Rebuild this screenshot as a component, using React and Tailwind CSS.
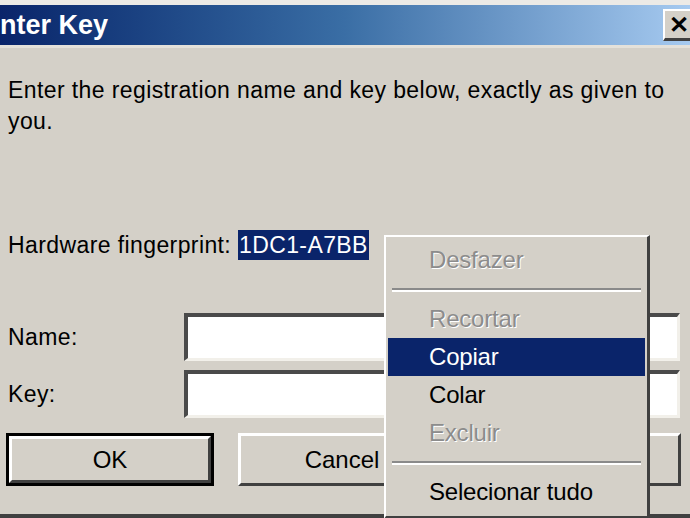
import React from 'react';

const dialogFont = { fontFamily: '"Liberation Sans", Arial, sans-serif' };

const MenuItem = ({ label, disabled, active }) => (
  <div
    className={
      'h-[38px] flex items-center pl-[41px] mx-[2px] text-[24px] tracking-[-0.2px] ' +
      (active ? 'bg-[#0a246a] text-white' : disabled ? 'text-[#8c8c8c] [text-shadow:1px_1px_0_#ffffff]' : 'text-black')
    }
  >
    {label}
  </div>
);

const Separator = () => (
  <div className="h-[21px] flex flex-col justify-center px-[6px]">
    <div className="h-[2px] bg-[#8a8a8a]" />
    <div className="h-[2px] bg-white" />
  </div>
);

const ContextMenu = () => (
  <div
    className="absolute left-[384px] top-[235px] w-[266px] h-[284px] bg-[#d4d0c8] border-t-2 border-l-2 border-t-white border-l-white border-r-[3px] border-b-[3px] border-r-[#404040] border-b-[#404040] pt-[4px]"
    style={dialogFont}
  >
    <MenuItem label="Desfazer" disabled />
    <Separator />
    <MenuItem label="Recortar" disabled />
    <MenuItem label="Copiar" active />
    <MenuItem label="Colar" />
    <MenuItem label="Excluir" disabled />
    <Separator />
    <MenuItem label="Selecionar tudo" />
  </div>
);

const Field = ({ label, className = '' }) => (
  <div className={'flex items-center ' + className}>
    <div className="w-[176px] text-[23px] tracking-[0.4px] text-black">{label}</div>
    <div className="w-[496px] h-[48px] bg-white border-t-[4px] border-l-[4px] border-t-[#4a4a4a] border-l-[#4a4a4a] border-b-[3px] border-r-[3px] border-b-[#f2f0ea] border-r-[#f2f0ea]" />
  </div>
);

const Button = ({ label, isDefault, width = 'w-[208px]' }) => (
  <div className={width + ' h-[53px] ' + (isDefault ? 'border-[3px] border-black' : '')}>
    <div className="h-full flex items-center justify-center text-[24px] text-black bg-[#d4d0c8] border-t-[3px] border-l-[3px] border-t-white border-l-white border-b-[3px] border-r-[3px] border-b-[#404040] border-r-[#404040]">
      {label}
    </div>
  </div>
);

export default function App() {
  return (
    <div className="relative w-[690px] h-[518px] overflow-hidden bg-[#d4d0c8] flex flex-col" style={dialogFont}>
      <div className="h-[5px] bg-[#eceae6]" />
      <div className="h-[40px] flex items-center justify-between bg-gradient-to-r from-[#0a246a] via-[#3a6ea5] to-[#a6caf0] overflow-hidden">
        <div className="ml-[-18px] text-[27px] font-bold text-white leading-none">Enter Key</div>
        <div className="w-[30px] h-[32px] mr-[-3px] bg-[#d4d0c8] border-t-2 border-l-2 border-t-white border-l-white border-b-[3px] border-b-[#404040] flex items-center justify-center text-[24px] font-bold text-black leading-none">
          ✕
        </div>
      </div>
      <div className="h-[3px] bg-[#e4e1da]" />
      <div className="flex-1 flex flex-col pl-[8px] pt-[27px] border-b-[4px] border-b-[#404040]">
        <p className="text-[23px] leading-[31px] tracking-[0.4px] text-black w-[676px]">
          Enter the registration name and key below, exactly as given to you.
        </p>
        <div className="mt-[93px] flex items-center text-[23px] tracking-[0.4px] text-black h-[30px]">
          <span>Hardware fingerprint:&nbsp;</span>
          <span className="bg-[#0a246a] text-white h-[30px] leading-[30px] px-[1px]">1DC1-A7BB</span>
        </div>
        <Field label="Name:" className="mt-[53px]" />
        <Field label="Key:" className="mt-[9px]" />
        <div className="mt-[15px] ml-[-2px] flex gap-[24px]">
          <Button label="OK" isDefault />
          <Button label="Cancel" />
          <Button label="Help" width="w-[211px]" />
        </div>
      </div>
      <ContextMenu />
    </div>
  );
}
